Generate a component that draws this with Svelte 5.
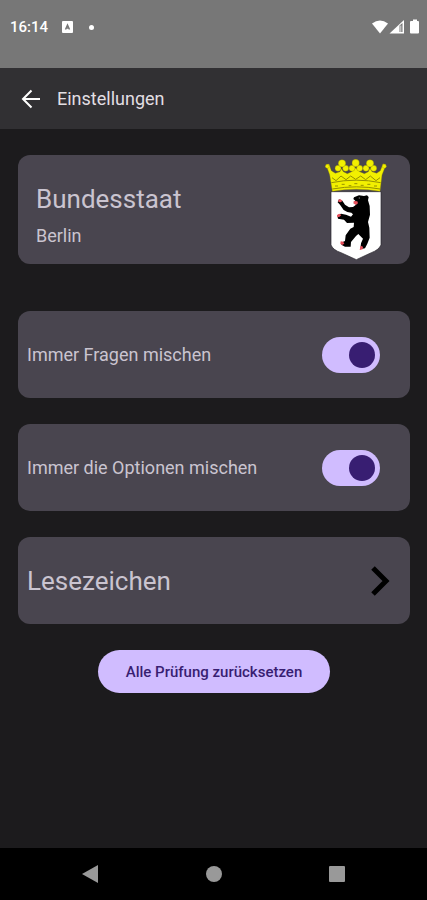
<script>
  // State
  let shuffleQuestions = true;
  let shuffleOptions = true;
  let state = 'Berlin';

  function resetAll() {
    shuffleQuestions = true;
    shuffleOptions = true;
  }
</script>

<div class="screen">
  <!-- Status bar -->
  <div class="status-bar">
    <span class="clock">16:14</span>
    <svg class="app-icon" width="11" height="12" viewBox="0 0 11 12" aria-hidden="true">
      <rect width="11" height="12" rx="1" fill="#fff" />
      <path d="M3.500 8.500 5.500 4 7.500 8.500M4 7h3" fill="none" stroke="#777" stroke-width="1.5" />
    </svg>
    <span class="dot"></span>
    <svg class="signals" width="50" height="16" viewBox="0 0 50 16" aria-hidden="true">
      <path d="M1 4.500Q9 -1.500 17 4.500L9 14.500Z" fill="#fff" />
      <path d="M18.500 14.500 33 1V14.500Z" fill="#fff" />
      <path d="M28.500 6.500 31.500 4V13H28.500Z" fill="#777" />
      <path d="M29.800 6.500V13" stroke="#ddd" stroke-width="1" />
      <path d="M40 2H42V.5h4V2h1a1 1 0 0 1 1 1V13.500a1 1 0 0 1-1 1H40a1 1 0 0 1-1-1V3a1 1 0 0 1 1-1Z" fill="#fff" />
    </svg>
  </div>

  <header class="app-bar">
    <button class="back-btn" aria-label="Zurück">
      <svg width="20" height="20" viewBox="0 0 20 20" aria-hidden="true">
        <path d="M19 10H2.500M10.500 1.500 2 10l8.500 8.500" fill="none" stroke="#fff" stroke-width="2" />
      </svg>
    </button>
    <h1>Einstellungen</h1>
  </header>

  <main>
    <!-- Federal state -->
    <button class="card state-card">
      <span class="state-text">
        <span class="card-title">Bundesstaat</span>
        <span class="state-name">{state}</span>
      </span>
      <svg class="emblem" width="62" height="101" viewBox="46 40 186 303" aria-hidden="true">
        <path d="M64 138H214V298Q207 313 185 321L140 342 94 321Q70 313 64 298Z" fill="#fff" stroke="#26232b" stroke-width="2" />
        <!-- Crown -->
        <g fill="#f2f000" stroke="#8b8500" stroke-width="1">
          <path d="M68 137 60 87 49 57 58 55 65 75 77 83 91 78 95 69 101 78 113 84 126 78 138 67 150 78 164 84 176 78 181 68 187 78 201 83 212 75 220 54 229 57 217 88 211 137Q140 124 68 137Z" />
          <circle cx="85" cy="68" r="9" />
          <circle cx="108" cy="68" r="9" />
          <circle cx="97" cy="53" r="11" />
          <circle cx="127" cy="68" r="9" />
          <circle cx="150" cy="68" r="9" />
          <circle cx="138" cy="52" r="11" />
          <circle cx="169" cy="68" r="9" />
          <circle cx="192" cy="68" r="9" />
          <circle cx="181" cy="53" r="11" />
          <circle cx="53" cy="62" r="6" />
          <circle cx="224" cy="62" r="6" />
        </g>
        <g fill="none" stroke="#969000" stroke-width="3">
          <path d="M65 111Q140 96 213 111M68 130Q140 117 211 130" />
          <path d="M67 96 79 105 94 91 109 102 123 91 138 101 153 91 168 102 182 91 199 105 211 96" />
          <path d="M76 121h9M96 116h9M117 120h8M134 114h9M153 119h9M173 116h9M193 121h9" />
        </g>
        <!-- Bear -->
        <path d="M133 155 148 149 163 151 172 149 177 154 175 164 180 181 181 207 175 229 179 246 180 276 173 294 166 308 152 311 154 293 160 279 146 265 139 271 124 289 123 303 106 303 95 297 97 290 106 286 108 269 122 249 132 244 133 231 112 232 103 222 85 219 83 209 94 204 109 207 124 213 130 206 125 201 113 199 102 193 91 177 84 170 88 161 98 165 106 177 118 185 130 184 138 178 142 173 131 173 137 165 131 160Z" fill="#000" />
        <g fill="#e9505c">
          <path d="m86 162 7-1 5 5-5 4-7-2Z" />
          <path d="m82 208 7-4 6 4-5 5-7 2Z" />
          <path d="m93 287 8 1 3 6-7 4-5-4Z" />
          <path d="m153 300 7 3-1 8-9 2Z" />
          <path d="m132 166 11 1 2 6-7 5-6-5Z" />
        </g>
        <circle cx="149" cy="157" r="2" fill="#777" />
      </svg>
    </button>

    <!-- Shuffle settings -->
    <label class="card">
      <span>Immer Fragen mischen</span>
      <input type="checkbox" role="switch" class="toggle" bind:checked={shuffleQuestions} />
    </label>

    <label class="card">
      <span>Immer die Optionen mischen</span>
      <input type="checkbox" role="switch" class="toggle" bind:checked={shuffleOptions} />
    </label>

    <button class="card">
      <span class="card-title">Lesezeichen</span>
      <svg class="chevron" width="20" height="32" viewBox="0 0 20 32" aria-hidden="true">
        <path d="M3 3 16 16 3 29" fill="none" stroke="#000" stroke-width="5" />
      </svg>
    </button>

    <button class="reset-btn" on:click={resetAll}>Alle Prüfung zurücksetzen</button>
  </main>

  <!-- System navigation -->
  <nav class="nav-bar">
    <button aria-label="Zurück">
      <svg width="18" height="18" viewBox="0 0 18 18"><path d="M1 9 17 0V18Z" fill="#999" /></svg>
    </button>
    <button aria-label="Startbildschirm">
      <svg width="18" height="18" viewBox="0 0 18 18"><circle cx="9" cy="9" r="8" fill="#999" /></svg>
    </button>
    <button aria-label="Übersicht">
      <svg width="18" height="18" viewBox="0 0 18 18"><rect x="1" y="1" width="16" height="16" rx="1" fill="#999" /></svg>
    </button>
  </nav>
</div>

<style>
  :global(body) {
    margin: 0;
    background: #1c1b1d;
  }

  .screen {
    display: flex;
    flex-direction: column;
    min-height: 100vh;
    background: #1c1b1d;
    color: #cac4d0;
    font-family: Roboto, 'Liberation Sans', sans-serif;
  }

  button {
    margin: 0;
    padding: 0;
    border: none;
    background: none;
    color: inherit;
    font: inherit;
    text-align: left;
    cursor: pointer;
  }

  svg {
    display: block;
    flex: none;
  }

  /* Status bar */
  .status-bar {
    display: flex;
    align-items: center;
    box-sizing: border-box;
    height: 68px;
    padding: 0 6px 14px 10px;
    background: #777;
    color: #fff;
  }

  .clock {
    font-size: 15px;
    font-weight: 500;
  }

  .app-icon {
    margin-left: 14px;
  }

  .dot {
    width: 5px;
    height: 5px;
    margin-left: 16px;
    border-radius: 50%;
    background: #fff;
  }

  .signals {
    margin-left: auto;
  }

  .app-bar {
    display: flex;
    align-items: center;
    gap: 16px;
    height: 61px;
    padding: 0 21px;
    background: #313033;
    color: #e2dfe3;
  }

  h1 {
    margin: 0;
    font-size: 18px;
    font-weight: 400;
  }

  main {
    display: flex;
    flex: 1;
    flex-direction: column;
    gap: 26px;
    padding: 26px 17px 26px 18px;
  }

  /* Cards */
  .card {
    display: flex;
    align-items: center;
    justify-content: space-between;
    box-sizing: border-box;
    min-height: 87px;
    padding: 0 30px 0 9px;
    border-radius: 12px;
    background: #49454f;
    font-size: 18px;
    cursor: pointer;
  }

  .state-card {
    min-height: 109px;
    margin-bottom: 21px;
    padding: 0 23px 0 18px;
  }

  .state-text {
    display: flex;
    flex-direction: column;
    gap: 9px;
    padding-top: 11px;
  }

  .card-title {
    font-size: 26px;
    line-height: 32px;
  }

  .state-name {
    line-height: 24px;
  }

  .chevron {
    margin-right: -10px;
  }

  /* Toggles */
  .toggle {
    display: flex;
    flex: none;
    align-items: center;
    box-sizing: border-box;
    width: 58px;
    height: 36px;
    margin: 0;
    padding: 5px;
    border-radius: 18px;
    background: #938f99;
    appearance: none;
    cursor: pointer;
  }

  .toggle::before {
    width: 26px;
    height: 26px;
    border-radius: 50%;
    background: #381e72;
    content: '';
  }

  .toggle:checked {
    justify-content: flex-end;
    background: #d0bcff;
  }

  .reset-btn {
    align-self: center;
    height: 43px;
    padding: 0 28px;
    border-radius: 22px;
    background: #d0bcff;
    color: #381e72;
    font-size: 15px;
    font-weight: 500;
  }

  .nav-bar {
    display: flex;
    align-items: center;
    justify-content: space-between;
    height: 52px;
    padding: 0 81px;
    background: #000;
  }
</style>
